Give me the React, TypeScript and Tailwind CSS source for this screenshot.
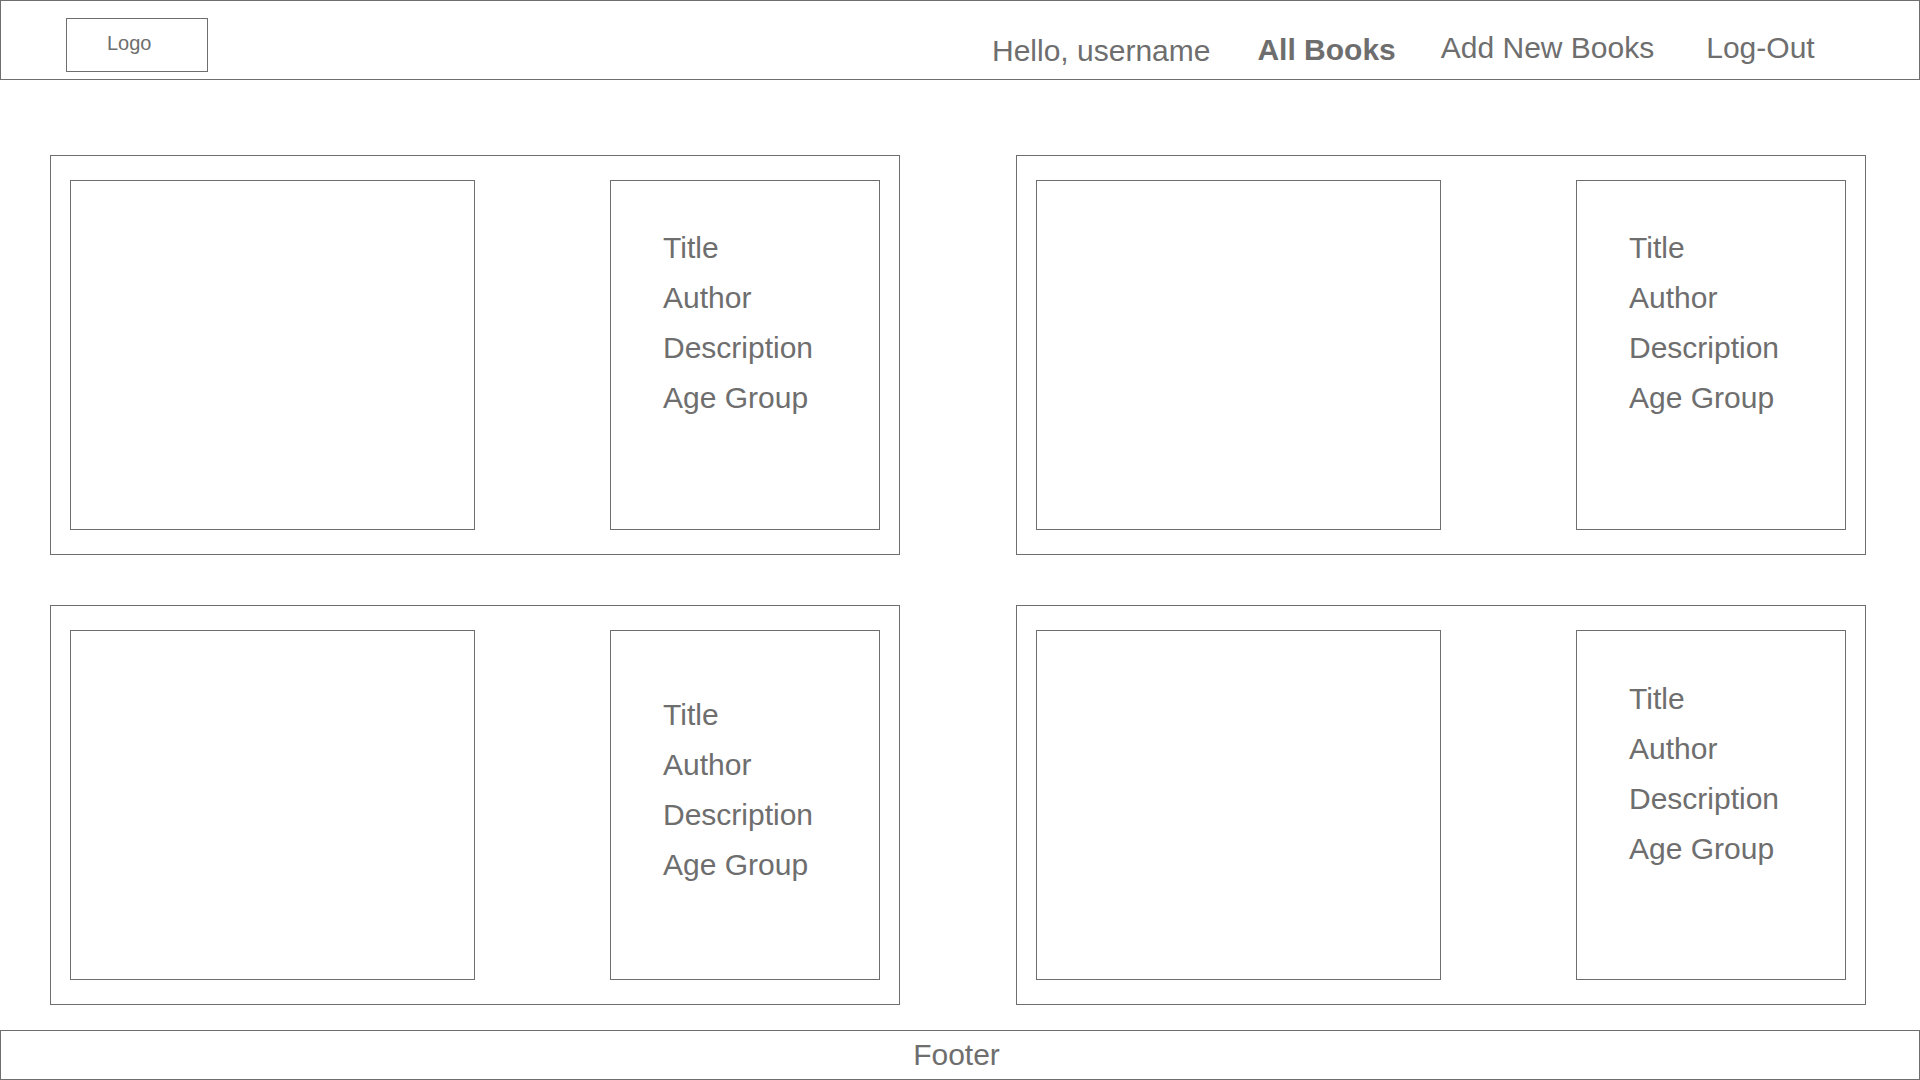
import React from "react";

type CardProps = { infoPad: string };

const lines = ["Title", "Author", "Description", "Age Group"];

function BookCard({ infoPad }: CardProps) {
  return (
    <div className="flex h-[400px] w-[850px] items-start border border-[#6e6e6e] pl-[19px] pt-[24px]">
      <div className="h-[350px] w-[405px] border border-[#6e6e6e]" />
      <div className={`ml-[135px] h-[350px] w-[270px] border border-[#6e6e6e] pl-[52px] ${infoPad}`}>
        {lines.map((l) => (
          <div key={l} className="text-[30px] leading-[50px] text-[#6e6e6e]">
            {l}
          </div>
        ))}
      </div>
    </div>
  );
}

export default function App() {
  return (
    <div
      className="flex h-[1080px] w-[1920px] flex-col overflow-hidden bg-white text-[#6e6e6e]"
      style={{ fontFamily: '"Liberation Sans", Arial, sans-serif' }}
    >
      <header className="flex h-[80px] w-full shrink-0 items-start border border-[#6e6e6e]">
        <div className="ml-[65px] mt-[17px] h-[54px] w-[142px] border border-[#6e6e6e] pl-[40px] pt-[14px] text-[20px] leading-[20px]">
          Logo
        </div>
        <nav className="ml-[784px] flex items-start text-[30px] leading-[30px]">
          <span className="mt-[35px]">Hello, username</span>
          <span className="ml-[47px] mt-[34px] font-bold">All Books</span>
          <span className="ml-[45px] mt-[32px]">Add New Books</span>
          <span className="ml-[52px] mt-[32px]">Log-Out</span>
        </nav>
      </header>

      <main className="grid grid-cols-[850px_850px] gap-x-[116px] gap-y-[50px] pl-[50px] pt-[75px]">
        <BookCard infoPad="pt-[42px]" />
        <BookCard infoPad="pt-[42px]" />
        <BookCard infoPad="pt-[59px]" />
        <BookCard infoPad="pt-[43px]" />
      </main>

      <footer className="mt-[25px] flex h-[50px] w-full shrink-0 items-center justify-center border border-[#6e6e6e] pr-[7px] text-[30px] leading-[30px]">
        Footer
      </footer>
    </div>
  );
}
